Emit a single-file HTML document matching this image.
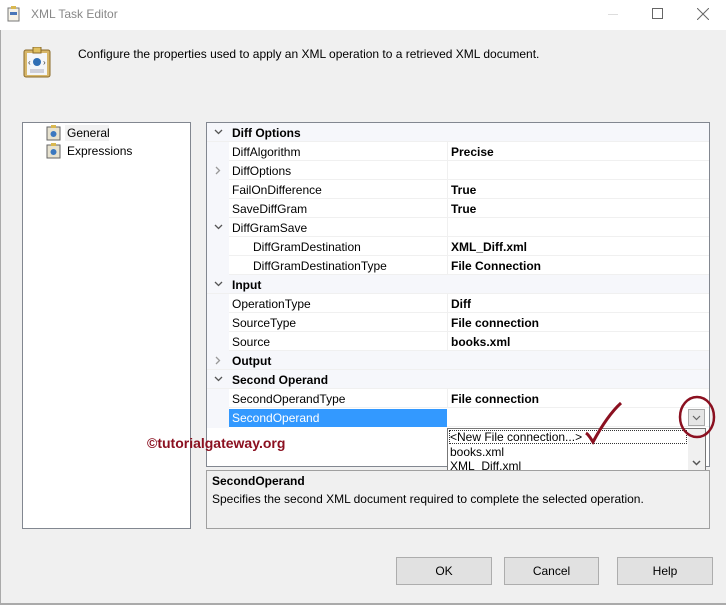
<!DOCTYPE html>
<html><head><style>
*{margin:0;padding:0;box-sizing:border-box}
body{width:726px;height:605px;background:#f0f0f0;font-family:"Liberation Sans",sans-serif;font-size:12px;color:#000;position:relative;overflow:hidden}
.a{position:absolute}
.row{position:absolute;left:0;width:502px;height:19px;border-bottom:1px solid #f0f0f0}
.row span{position:absolute;top:3px;white-space:nowrap}
.n{left:25px}
.vl{position:absolute;left:240px;top:0;width:1px;height:19px;background:#f0f0f0}
.cat{background:#f6f7fb}
.cat .n{font-weight:bold}
.ar{position:absolute;left:7px;top:6px}
.btn{position:absolute;top:557px;height:28px;background:#e1e1e1;border:1px solid #adadad;text-align:center;line-height:26px}
</style></head><body>
<div class="a" style="left:0;top:0;width:726px;height:30px;background:#fff"></div>
<svg class="a" style="left:7px;top:6px" width="14" height="16"><rect x="1" y="2" width="11" height="13" fill="#f6f3e8" stroke="#777"/><rect x="4" y="0" width="5" height="3" fill="#d9b850"/><rect x="3" y="6" width="7" height="3" fill="#4a77b8"/></svg>
<div class="a" style="left:31px;top:7px;color:#888;font-size:12px">XML Task Editor</div>
<div class="a" style="left:608px;top:14px;width:10px;height:1px;background:#ddd"></div>
<div class="a" style="left:652px;top:8px;width:11px;height:11px;border:1px solid #666"></div>
<svg class="a" style="left:697px;top:8px" width="12" height="12"><path d="M0 0L12 12M12 0L0 12" stroke="#666" stroke-width="1"/></svg>
<div class="a" style="left:0;top:30px;width:1px;height:575px;background:#aaa"></div>
<svg class="a" style="left:23px;top:47px" width="30" height="32"><rect x="1" y="3" width="26" height="27" rx="2" fill="#d7b76a" stroke="#8a6a2a"/><rect x="4" y="6" width="20" height="22" fill="#f4f6f9"/><rect x="10" y="0" width="8" height="6" fill="#e0c060" stroke="#8a6a2a"/><circle cx="14" cy="15" r="4" fill="#2f6fb5"/><text x="5" y="18" font-size="8" fill="#333">‹</text><text x="20" y="18" font-size="8" fill="#333">›</text><path d="M7 23H21M7 25H21" stroke="#aab"/></svg>
<div class="a" style="left:78px;top:47px">Configure the properties used to apply an XML operation to a retrieved XML document.</div>

<div class="a" style="left:22px;top:122px;width:169px;height:407px;background:#fff;border:1px solid #828790"></div>
<svg class="a" style="left:46px;top:125px" width="16" height="16"><rect x="1" y="2" width="13" height="13" fill="#e8e3d0" stroke="#666"/><rect x="5" y="0" width="5" height="3" fill="#d9b850"/><circle cx="7.5" cy="9" r="3" fill="#3b78c0"/></svg>
<svg class="a" style="left:46px;top:143px" width="16" height="16"><rect x="1" y="2" width="13" height="13" fill="#e8e3d0" stroke="#666"/><rect x="5" y="0" width="5" height="3" fill="#d9b850"/><circle cx="7.5" cy="9" r="3" fill="#3b78c0"/></svg>
<div class="a" style="left:65px;top:125px;width:44px;height:16px;background:#f2f2f2"></div>
<div class="a" style="left:67px;top:126px">General</div>
<div class="a" style="left:67px;top:144px">Expressions</div>

<div class="a" style="left:206px;top:122px;width:504px;height:345px;background:#fff;border:1px solid #828790;overflow:hidden">
<div class="a" style="left:0;top:0;width:22px;height:305px;background:#f6f7fb"></div>
<div style="position:absolute;left:0;top:0">
<div class="row cat" style="top:0"><svg class="ar" width="9" height="6"><path d="M1 1L4.5 4.5L8 1" stroke="#555" stroke-width="1.3" fill="none"/></svg><span class="n">Diff Options</span></div>
<div class="row" style="top:19px;left:22px;width:480px"><span style="left:3px">DiffAlgorithm</span><span style="left:222px;font-weight:bold">Precise</span><div class="vl" style="left:218px"></div></div>
<div class="row" style="top:38px;left:22px;width:480px"><svg style="position:absolute;left:-14px;top:5px" width="6" height="9"><path d="M1 1L4.5 4.5L1 8" stroke="#999" stroke-width="1.3" fill="none"/></svg><span style="left:3px">DiffOptions</span><div class="vl" style="left:218px"></div></div>
<div class="row" style="top:57px;left:22px;width:480px"><span style="left:3px">FailOnDifference</span><span style="left:222px;font-weight:bold">True</span><div class="vl" style="left:218px"></div></div>
<div class="row" style="top:76px;left:22px;width:480px"><span style="left:3px">SaveDiffGram</span><span style="left:222px;font-weight:bold">True</span><div class="vl" style="left:218px"></div></div>
<div class="row" style="top:95px;left:22px;width:480px"><svg style="position:absolute;left:-15px;top:6px" width="9" height="6"><path d="M1 1L4.5 4.5L8 1" stroke="#555" stroke-width="1.3" fill="none"/></svg><span style="left:3px">DiffGramSave</span><div class="vl" style="left:218px"></div></div>
<div class="row" style="top:114px;left:22px;width:480px"><span style="left:24px">DiffGramDestination</span><span style="left:222px;font-weight:bold">XML_Diff.xml</span><div class="vl" style="left:218px"></div></div>
<div class="row" style="top:133px;left:22px;width:480px"><span style="left:24px">DiffGramDestinationType</span><span style="left:222px;font-weight:bold">File Connection</span><div class="vl" style="left:218px"></div></div>
<div class="row cat" style="top:152px"><svg class="ar" width="9" height="6"><path d="M1 1L4.5 4.5L8 1" stroke="#555" stroke-width="1.3" fill="none"/></svg><span class="n">Input</span></div>
<div class="row" style="top:171px;left:22px;width:480px"><span style="left:3px">OperationType</span><span style="left:222px;font-weight:bold">Diff</span><div class="vl" style="left:218px"></div></div>
<div class="row" style="top:190px;left:22px;width:480px"><span style="left:3px">SourceType</span><span style="left:222px;font-weight:bold">File connection</span><div class="vl" style="left:218px"></div></div>
<div class="row" style="top:209px;left:22px;width:480px"><span style="left:3px">Source</span><span style="left:222px;font-weight:bold">books.xml</span><div class="vl" style="left:218px"></div></div>
<div class="row cat" style="top:228px"><svg style="position:absolute;left:8px;top:5px" width="6" height="9"><path d="M1 1L4.5 4.5L1 8" stroke="#999" stroke-width="1.3" fill="none"/></svg><span class="n">Output</span></div>
<div class="row cat" style="top:247px"><svg class="ar" width="9" height="6"><path d="M1 1L4.5 4.5L8 1" stroke="#555" stroke-width="1.3" fill="none"/></svg><span class="n">Second Operand</span></div>
<div class="row" style="top:266px;left:22px;width:480px"><span style="left:3px">SecondOperandType</span><span style="left:222px;font-weight:bold">File connection</span><div class="vl" style="left:218px"></div></div>
<div class="row" style="top:285px;left:22px;width:480px"><div style="position:absolute;left:0;top:1px;width:218px;height:18px;background:#3399ff"></div><span style="left:3px;color:#fff">SecondOperand</span></div>
</div>
</div>
<div class="a" style="left:688px;top:409px;width:17px;height:17px;background:#e5e5e5;border:1px solid #aaa"><svg style="position:absolute;left:3px;top:5px" width="9" height="6"><path d="M1 1L4.5 4.5L8 1" stroke="#666" stroke-width="1.2" fill="none"/></svg></div>
<div class="a" style="left:447px;top:428px;width:259px;height:45px;background:#fff;border:1px solid #777">
<div class="a" style="left:1px;top:1px;width:238px;height:14px;border:1px dotted #333"></div>
<div class="a" style="left:2px;top:1px">&lt;New File connection...&gt;</div>
<div class="a" style="left:2px;top:16px">books.xml</div>
<div class="a" style="left:2px;top:30px">XML_Diff.xml</div>
<div class="a" style="left:240px;top:0;width:17px;height:43px;background:#f0f0f0"><svg style="position:absolute;left:4px;top:31px" width="9" height="6"><path d="M1 1L4.5 4.5L8 1" stroke="#555" stroke-width="1.5" fill="none"/></svg></div>
</div>
<svg class="a" style="left:580px;top:395px" width="140" height="60"><path d="M6 38C9 40 11 44 13 47C20 34 30 18 41 8" stroke="#8b1020" stroke-width="3" fill="none"/><ellipse cx="117" cy="22" rx="17" ry="20" stroke="#8b1020" stroke-width="2.5" fill="none"/></svg>
<div class="a" style="left:147px;top:435px;color:#8b1020;font-weight:bold;font-size:14px">©tutorialgateway.org</div>

<div class="a" style="left:206px;top:470px;width:504px;height:59px;border:1px solid #a0a0a0;background:#f0f0f0"></div>
<div class="a" style="left:212px;top:474px;font-weight:bold">SecondOperand</div>
<div class="a" style="left:212px;top:492px">Specifies the second XML document required to complete the selected operation.</div>

<div class="btn" style="left:396px;width:96px">OK</div>
<div class="btn" style="left:504px;width:95px">Cancel</div>
<div class="btn" style="left:617px;width:96px">Help</div>
<div class="a" style="left:0;top:603px;width:726px;height:2px;background:#aaa"></div>
</body></html>
